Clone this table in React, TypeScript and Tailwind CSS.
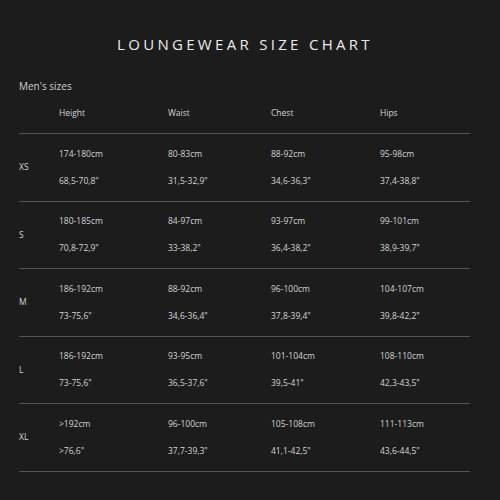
const rows = [
  { size: "XS", cm: ["174-180cm", "80-83cm", "88-92cm", "95-98cm"], inch: ['68,5-70,8"', '31,5-32,9"', '34,6-36,3"', '37,4-38,8"'] },
  { size: "S", cm: ["180-185cm", "84-97cm", "93-97cm", "99-101cm"], inch: ['70,8-72,9"', '33-38,2"', '36,4-38,2"', '38,9-39,7"'] },
  { size: "M", cm: ["186-192cm", "88-92cm", "96-100cm", "104-107cm"], inch: ['73-75,6"', '34,6-36,4"', '37,8-39,4"', '39,8-42,2"'] },
  { size: "L", cm: ["186-192cm", "93-95cm", "101-104cm", "108-110cm"], inch: ['73-75,6"', '36,5-37,6"', '39,5-41"', '42,3-43,5"'] },
  { size: "XL", cm: [">192cm", "96-100cm", "105-108cm", "111-113cm"], inch: ['>76,6"', '37,7-39,3"', '41,1-42,5"', '43,6-44,5"'] },
];

const cols = "grid grid-cols-[40px_109px_103px_109px_1fr]";

export default function App() {
  return (
    <div className="h-[500px] w-[500px] bg-[#1c1c1c] pt-[34px] text-[#d4d4d4]" style={{ fontFamily: '"Open Sans", sans-serif' }}>
      <h1 className="pr-[10px] text-center text-[15px] font-normal uppercase leading-[20px] tracking-[0.22em] text-[#ebebeb]">
        Loungewear size chart
      </h1>

      <div className="mt-[25px] pl-[19px] pr-[30px]">
        <p className="text-[10px] leading-[14px] text-[#cfcfcf]">Men's sizes</p>

        <div className={`${cols} mt-[14px] border-b border-[#555] pb-[14px] text-[8.5px] leading-[12px]`}>
          <span />
          <span>Height</span>
          <span>Waist</span>
          <span>Chest</span>
          <span>Hips</span>
        </div>

        {rows.map((r) => (
          <div key={r.size} className={`${cols} h-[67.5px] items-center border-b border-[#555] text-[8.5px] leading-[12px]`}>
            <span>{r.size}</span>
            {r.cm.map((c, i) => (
              <div key={i} className="flex flex-col gap-[15px]">
                <span>{c}</span>
                <span>{r.inch[i]}</span>
              </div>
            ))}
          </div>
        ))}
      </div>
    </div>
  );
}
